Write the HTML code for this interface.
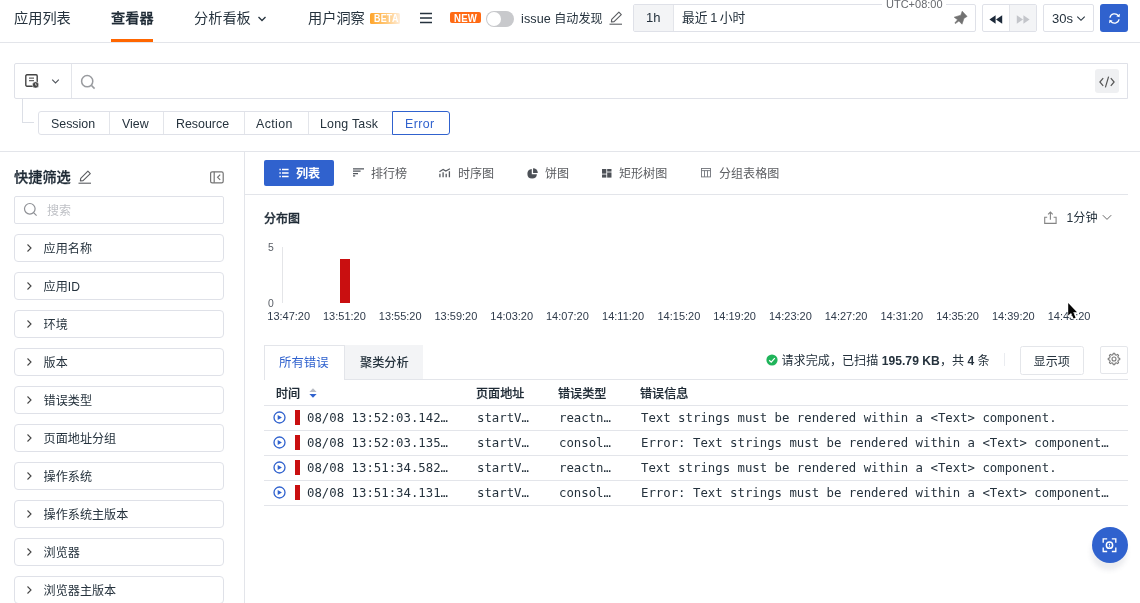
<!DOCTYPE html>
<html lang="zh-CN">
<head>
<meta charset="utf-8">
<title>查看器</title>
<style>
*{box-sizing:border-box;margin:0;padding:0}
html,body{width:1140px;height:603px;overflow:hidden;background:#fff}
body{position:relative;font-family:"Liberation Sans","Noto Sans CJK SC",sans-serif;font-size:12px;color:#25323d;-webkit-font-smoothing:antialiased}
.abs{position:absolute}
.t{position:absolute;white-space:nowrap;line-height:1}
.mono{font-family:"DejaVu Sans Mono","Liberation Mono","Noto Sans CJK SC",monospace}
.hline{position:absolute;height:1px;background:#e3e5ea}
.vline{position:absolute;width:1px;background:#e3e5ea}
.box{position:absolute;border:1px solid #dfe1e8;background:#fff}
svg{position:absolute;overflow:visible}
/* sidebar items */
.fi{position:absolute;left:14px;width:210px;height:28px;border:1px solid #dfe1e8;border-radius:4px;background:#fff}
.fi span{position:absolute;left:28.6px;top:7.8px;font-size:12.1px;line-height:1;white-space:nowrap}
.fi svg{left:11.3px;top:8.3px}
/* table rows */
.row{position:absolute;left:264px;width:864px;height:25px;border-bottom:1px solid #e3e5ea}
.row .c{position:absolute;top:5.8px;font-size:12.33px;line-height:1;white-space:nowrap}
.row .bar{position:absolute;left:31.3px;top:4.2px;width:4.5px;height:15.2px;background:#c90f10}
</style>
</head>
<body>
<div id="app" style="position:absolute;left:0;top:0;width:1140px;height:603px;will-change:transform">

<!-- ================= TOP NAV ================= -->
<div id="nav">
  <div class="t" style="left:14px;top:11.3px;font-size:14.2px">应用列表</div>
  <div class="t" style="left:111px;top:11.3px;font-size:14.2px;font-weight:500;-webkit-text-stroke:0.3px #1f2b36;color:#1f2b36">查看器</div>
  <div class="abs" style="left:111px;top:39px;width:42.4px;height:3px;background:#ff6600"></div>
  <div class="t" style="left:194px;top:11.3px;font-size:14.2px">分析看板</div>
  <svg style="left:257px;top:15px" width="10" height="8" viewBox="0 0 10 8"><path d="M1.5 2 L5 5.5 L8.5 2" fill="none" stroke="#25323d" stroke-width="1.3"/></svg>
  <div class="t" style="left:308px;top:11.3px;font-size:14.2px">用户洞察</div>
  <div class="abs" style="left:369.8px;top:13.4px;width:30.2px;height:11px;border-radius:1.5px;background:linear-gradient(90deg,#ffa52b 0%,#ffc777 55%,#ffeedb 100%)"></div>
  <div class="t" style="left:373.5px;top:13.2px;font-size:10.6px;font-weight:700;color:#fff;letter-spacing:0.3px;transform:scaleX(0.84);transform-origin:0 0">BETA</div>
  <svg style="left:420.2px;top:12.3px" width="12" height="12" viewBox="0 0 12 12"><path d="M0 1.5H12M0 6H12M0 10.5H12" stroke="#25323d" stroke-width="1.4"/></svg>
  <div class="abs" style="left:450.4px;top:12px;width:30.2px;height:11.2px;border-radius:2px;background:#ff6a13"></div>
  <div class="t" style="left:453.8px;top:13.1px;font-size:10.6px;font-weight:700;color:#fff;letter-spacing:0.2px;transform:scaleX(0.91);transform-origin:0 0">NEW</div>
  <div class="abs" style="left:486.3px;top:11px;width:28.2px;height:16px;border-radius:8px;background:#c8c9cc"></div>
  <div class="abs" style="left:487.2px;top:12px;width:14px;height:14px;border-radius:7px;background:#fff"></div>
  <div class="t" style="left:521px;top:12.6px;font-size:12.08px"><span style="font-size:12.6px;letter-spacing:0.1px">issue</span> 自动发现</div>
  <svg style="left:609px;top:11px" width="14" height="14" viewBox="0 0 14 14"><path d="M2.4 10.9 L2.7 8.4 L9.9 1.2 L12.3 3.6 L5.1 10.6 Z" fill="none" stroke="#5a5c60" stroke-width="1.1" stroke-linejoin="round"/><path d="M0.5 13.2H13" stroke="#5a5c60" stroke-width="1.1"/></svg>

  <!-- time box -->
  <div class="box" style="left:633px;top:4px;width:343px;height:28px;border-radius:2px"></div>
  <div class="abs" style="left:634px;top:5px;width:40px;height:26px;background:#f3f4f6;border-right:1px solid #e3e5ea"></div>
  <div class="t" style="left:646px;top:11px;font-size:13px">1h</div>
  <div class="t" style="left:682px;top:11.8px;font-size:12.8px;word-spacing:-1px">最近 1 小时</div>
  <div class="abs" style="left:882px;top:0;width:64px;height:8px;background:#fff"></div>
  <div class="t" style="left:886px;top:-0.6px;font-size:11px;color:#676a6f">UTC+08:00</div>
  <svg style="left:953px;top:10px" width="15" height="15" viewBox="0 0 15 15"><path d="M9.2 1.2 L14.1 6.4 L11 8.3 L9 14.2 L5.9 11 L2.4 13.6 L1.8 13 L4.6 9.8 L1.2 7.2 L7.8 5.2 Z" fill="#727272" stroke="#727272" stroke-width="0.6" stroke-linejoin="round"/></svg>

  <!-- rewind group -->
  <div class="box" style="left:982px;top:4px;width:55px;height:28px;border-radius:2px"></div>
  <div class="abs" style="left:1009px;top:5px;width:27px;height:26px;background:#f3f4f6;border-left:1px solid #e3e5ea"></div>
  <svg style="left:989px;top:14.7px" width="14" height="9" viewBox="0 0 14 9"><path d="M6.6 0.3V8.7L0.4 4.5Z M13.2 0.3V8.7L7 4.5Z" fill="#1d2a3a"/></svg>
  <svg style="left:1016px;top:14.7px" width="14" height="9" viewBox="0 0 14 9"><path d="M0.8 0.3V8.7L7 4.5Z M7.4 0.3V8.7L13.6 4.5Z" fill="#c3c5ca"/></svg>

  <!-- 30s -->
  <div class="box" style="left:1043px;top:4px;width:51px;height:28px;border-radius:2px"></div>
  <div class="t" style="left:1052px;top:11.6px;font-size:13px">30s</div>
  <svg style="left:1076px;top:15.4px" width="10" height="8" viewBox="0 0 10 8"><path d="M1.3 1.6 L5 5.3 L8.7 1.6" fill="none" stroke="#25323d" stroke-width="1.1"/></svg>

  <!-- refresh -->
  <div class="abs" style="left:1100px;top:4px;width:28px;height:28px;border-radius:3px;background:#3062ce"></div>
  <svg style="left:1107.6px;top:12px" width="13" height="13" viewBox="0 0 14 14"><path d="M2.1 6.2 A5 5 0 0 1 11.2 4.2 M11.9 7.8 A5 5 0 0 1 2.8 9.8" fill="none" stroke="#fff" stroke-width="1.4"/><path d="M12.9 2 L12.4 5.6 L8.9 4.6 Z M1.1 12 L1.6 8.4 L5.1 9.4 Z" fill="#fff"/></svg>

  <div class="hline" style="left:0;top:42px;width:1140px"></div>
</div>

<!-- ================= SEARCH BAR ================= -->
<div id="search">
  <div class="box" style="left:14px;top:63px;width:1114px;height:36px;border-radius:2px 0 0 2px"></div>
  <div class="vline" style="left:71px;top:64px;height:34px"></div>
  <svg style="left:25px;top:74.4px" width="15" height="15" viewBox="0 0 15 15"><rect x="0.8" y="0.8" width="11.4" height="11.4" rx="1.1" fill="none" stroke="#444" stroke-width="1.4"/><path d="M4 4.2H9M4 6.6H9" stroke="#666" stroke-width="1.2"/><circle cx="10.6" cy="10.9" r="3.2" fill="#444" stroke="#fff" stroke-width="0.6"/><path d="M10.6 9.2V11.1H12" stroke="#ddd" stroke-width="0.8" fill="none"/></svg>
  <svg style="left:51px;top:77.6px" width="9" height="7" viewBox="0 0 9 7"><path d="M1.2 1.6 L4.5 4.9 L7.8 1.6" fill="none" stroke="#50555c" stroke-width="1.1"/></svg>
  <svg style="left:80.4px;top:73.6px" width="16" height="16" viewBox="0 0 16 16"><circle cx="7.2" cy="7.2" r="5.6" fill="none" stroke="#999b9f" stroke-width="1.5"/><path d="M11.4 11.4L14.6 14.6" stroke="#999b9f" stroke-width="1.5"/></svg>
  <div class="abs" style="left:1095px;top:69px;width:24px;height:24px;border-radius:3px;background:#eff0f2"></div>
  <svg style="left:1099px;top:75.8px" width="16" height="12" viewBox="0 0 16 12"><path d="M4.2 2.2L0.9 6L4.2 9.8M11.8 2.2L15.1 6L11.8 9.8M9.6 0.6L6.4 11.4" fill="none" stroke="#555" stroke-width="1.2"/></svg>

  <!-- connector -->
  <div class="vline" style="left:22px;top:99px;height:24px;background:#dcdfe6"></div>
  <div class="hline" style="left:22px;top:122px;width:12px;background:#dcdfe6"></div>

  <!-- type tabs -->
  <div class="box" style="left:38px;top:111px;width:355px;height:24px;border-radius:3px 0 0 3px"></div>
  <div class="vline" style="left:109px;top:112px;height:22px"></div>
  <div class="vline" style="left:163px;top:112px;height:22px"></div>
  <div class="vline" style="left:244px;top:112px;height:22px"></div>
  <div class="vline" style="left:307.5px;top:112px;height:22px"></div>
  <div class="abs" style="left:392px;top:111px;width:58px;height:24px;border:1px solid #3062ce;border-radius:0 3px 3px 0;background:#fff"></div>
  <div class="t" style="left:51px;top:117.8px;font-size:12.4px">Session</div>
  <div class="t" style="left:122px;top:117.8px;font-size:12.4px">View</div>
  <div class="t" style="left:176px;top:117.8px;font-size:12.4px">Resource</div>
  <div class="t" style="left:256px;top:117.8px;font-size:12.4px;letter-spacing:0.4px">Action</div>
  <div class="t" style="left:320px;top:117.8px;font-size:12.4px;letter-spacing:0.22px">Long Task</div>
  <div class="t" style="left:405px;top:117.8px;font-size:12.4px;letter-spacing:0.4px;color:#3062ce">Error</div>

  <div class="hline" style="left:0;top:151px;width:1140px"></div>
</div>

<!-- ================= SIDEBAR ================= -->
<div id="side">
  <div class="vline" style="left:244px;top:152px;height:451px"></div>
  <div class="t" style="left:14px;top:170px;font-size:14.2px;font-weight:500;-webkit-text-stroke:0.3px #1f2b36;color:#1f2b36">快捷筛选</div>
  <svg style="left:77.8px;top:170.2px" width="14" height="14" viewBox="0 0 14 14"><path d="M2.4 10.9 L2.7 8.4 L9.9 1.2 L12.3 3.6 L5.1 10.6 Z" fill="none" stroke="#5a5c60" stroke-width="1.1" stroke-linejoin="round"/><path d="M0.5 13.2H13" stroke="#5a5c60" stroke-width="1.1"/></svg>
  <svg style="left:209px;top:170px" width="16" height="14" viewBox="0 0 16 14"><rect x="1.6" y="1.8" width="12.6" height="11" rx="1.6" fill="none" stroke="#747474" stroke-width="1.2"/><path d="M5.2 1.8V12.8" stroke="#747474" stroke-width="1.2"/><path d="M11.2 4.7L8.6 7.3L11.2 9.9" fill="none" stroke="#747474" stroke-width="1.2"/></svg>

  <div class="box" style="left:14px;top:196px;width:210px;height:28px;border-radius:2px"></div>
  <svg style="left:23px;top:202px" width="15" height="15" viewBox="0 0 15 15"><circle cx="6.8" cy="6.8" r="5.3" fill="none" stroke="#8f9196" stroke-width="1.2"/><path d="M10.8 10.8L13.6 13.6" stroke="#8f9196" stroke-width="1.2"/></svg>
  <div class="t" style="left:47px;top:205.3px;font-size:12px;color:#bfc1c6">搜索</div>

  <div class="fi" style="top:234px"><svg width="7" height="10" viewBox="0 0 7 10"><path d="M1.5 1.5L5 5L1.5 8.5" fill="none" stroke="#444" stroke-width="1.1"/></svg><span>应用名称</span></div>
  <div class="fi" style="top:272px"><svg width="7" height="10" viewBox="0 0 7 10"><path d="M1.5 1.5L5 5L1.5 8.5" fill="none" stroke="#444" stroke-width="1.1"/></svg><span>应用ID</span></div>
  <div class="fi" style="top:310px"><svg width="7" height="10" viewBox="0 0 7 10"><path d="M1.5 1.5L5 5L1.5 8.5" fill="none" stroke="#444" stroke-width="1.1"/></svg><span>环境</span></div>
  <div class="fi" style="top:348px"><svg width="7" height="10" viewBox="0 0 7 10"><path d="M1.5 1.5L5 5L1.5 8.5" fill="none" stroke="#444" stroke-width="1.1"/></svg><span>版本</span></div>
  <div class="fi" style="top:386px"><svg width="7" height="10" viewBox="0 0 7 10"><path d="M1.5 1.5L5 5L1.5 8.5" fill="none" stroke="#444" stroke-width="1.1"/></svg><span>错误类型</span></div>
  <div class="fi" style="top:424px"><svg width="7" height="10" viewBox="0 0 7 10"><path d="M1.5 1.5L5 5L1.5 8.5" fill="none" stroke="#444" stroke-width="1.1"/></svg><span>页面地址分组</span></div>
  <div class="fi" style="top:462px"><svg width="7" height="10" viewBox="0 0 7 10"><path d="M1.5 1.5L5 5L1.5 8.5" fill="none" stroke="#444" stroke-width="1.1"/></svg><span>操作系统</span></div>
  <div class="fi" style="top:500px"><svg width="7" height="10" viewBox="0 0 7 10"><path d="M1.5 1.5L5 5L1.5 8.5" fill="none" stroke="#444" stroke-width="1.1"/></svg><span>操作系统主版本</span></div>
  <div class="fi" style="top:538px"><svg width="7" height="10" viewBox="0 0 7 10"><path d="M1.5 1.5L5 5L1.5 8.5" fill="none" stroke="#444" stroke-width="1.1"/></svg><span>浏览器</span></div>
  <div class="fi" style="top:576px"><svg width="7" height="10" viewBox="0 0 7 10"><path d="M1.5 1.5L5 5L1.5 8.5" fill="none" stroke="#444" stroke-width="1.1"/></svg><span>浏览器主版本</span></div>
</div>

<!-- ================= MAIN ================= -->
<div id="main">
  <!-- view tabs -->
  <div class="abs" style="left:264px;top:160px;width:70.2px;height:26px;border-radius:2px;background:#3062ce"></div>
  <svg style="left:279px;top:168px" width="10" height="10" viewBox="0 0 10 10"><path d="M3 1.5H9.6M3 5H9.6M3 8.5H9.6" stroke="#fff" stroke-width="1.4"/><path d="M0.4 1.5H1.8M0.4 5H1.8M0.4 8.5H1.8" stroke="#fff" stroke-width="1.4"/></svg>
  <div class="t" style="left:296px;top:167.6px;font-size:12.1px;font-weight:700;color:#fff">列表</div>

  <svg style="left:353px;top:168.3px" width="12" height="9" viewBox="0 0 12 9"><path d="M0 0.8H11M0 3.2H7.6M0 5.6H5M0 7.8H2.2" stroke="#50555c" stroke-width="1.3"/></svg>
  <div class="t" style="left:371px;top:167.8px;font-size:12.05px;color:#5a5c60">排行榜</div>
  <svg style="left:439.4px;top:167.5px" width="12" height="10" viewBox="0 0 12 10"><path d="M0.9 9.3V5.7M4.1 9.3V4.3M7.2 9.3V5.7M10.4 9.3V3.2" stroke="#55595f" stroke-width="1.3"/><path d="M0.4 3.7L4.1 1.5L6.8 3L10.9 0.7" fill="none" stroke="#55595f" stroke-width="1.1"/></svg>
  <div class="t" style="left:458px;top:167.8px;font-size:12.05px;color:#5a5c60">时序图</div>
  <svg style="left:526.6px;top:167.6px" width="11" height="11" viewBox="0 0 12 12"><path d="M5.2 1.2A5.2 5.2 0 1 0 10.8 6.8H5.2Z" fill="#4d5157"/><path d="M6.6 0.2A5.2 5.2 0 0 1 11.8 5.4H6.6Z" fill="#4d5157"/></svg>
  <div class="t" style="left:545px;top:167.8px;font-size:12.05px;color:#5a5c60">饼图</div>
  <svg style="left:602.4px;top:168.6px" width="9.5" height="8.6" viewBox="0 0 11 10"><rect x="0" y="0" width="5" height="5.4" fill="#4d5157"/><rect x="0" y="6.4" width="5" height="3.6" fill="#4d5157"/><rect x="6" y="0" width="5" height="3" fill="#4d5157"/><rect x="6" y="4" width="5" height="6" fill="#4d5157"/></svg>
  <div class="t" style="left:619px;top:167.8px;font-size:12.05px;color:#5a5c60">矩形树图</div>
  <svg style="left:701px;top:168.4px" width="10" height="9.4" viewBox="0 0 10 9.4"><rect x="0.5" y="0.5" width="9" height="8.4" fill="none" stroke="#70747a" stroke-width="0.9"/><path d="M0.5 2.6H9.5M3.5 2.6V8.9M6.5 2.6V8.9" stroke="#70747a" stroke-width="0.9"/></svg>
  <div class="t" style="left:719px;top:167.8px;font-size:12.05px;color:#5a5c60">分组表格图</div>
  <div class="hline" style="left:245px;top:194px;width:883px"></div>

  <!-- distribution chart -->
  <div class="t" style="left:264px;top:212.5px;font-size:12px;font-weight:500;-webkit-text-stroke:0.3px #1f2b36;color:#1f2b36">分布图</div>
  <svg style="left:1043px;top:210px" width="15" height="15" viewBox="0 0 15 15"><path d="M4.2 7.3H1.7V13.4H13.1V7.3H10.6" fill="none" stroke="#858585" stroke-width="1.1"/><path d="M7.4 9.8V2.2M5.1 4.4L7.4 2.1L9.7 4.4" fill="none" stroke="#858585" stroke-width="1.1"/></svg>
  <div class="t" style="left:1066.6px;top:212.4px;font-size:12.1px">1分钟</div>
  <svg style="left:1101.5px;top:213.8px" width="10" height="7" viewBox="0 0 10 7"><path d="M0.8 1.2L5 5.4L9.2 1.2" fill="none" stroke="#666" stroke-width="1"/></svg>

  <div class="t" style="left:268px;top:243.4px;font-size:10.4px;color:#585d65">5</div>
  <div class="t" style="left:268px;top:299.4px;font-size:10.4px;color:#585d65">0</div>
  <div class="vline" style="left:282px;top:246.6px;height:56.8px;background:#e4e5e8"></div>
  <div class="abs" style="left:340px;top:258.8px;width:9.5px;height:44.5px;background:#c90f10"></div>
  <svg style="left:245px;top:308px" width="883" height="16" viewBox="245 308 883 16" font-family="Liberation Sans, sans-serif" font-size="11" fill="#2f3b4b" text-anchor="middle">
    <text x="288.7" y="319.5">13:47:20</text>
    <text x="344.4" y="319.5">13:51:20</text>
    <text x="400.2" y="319.5">13:55:20</text>
    <text x="455.9" y="319.5">13:59:20</text>
    <text x="511.7" y="319.5">14:03:20</text>
    <text x="567.4" y="319.5">14:07:20</text>
    <text x="623.1" y="319.5">14:11:20</text>
    <text x="678.9" y="319.5">14:15:20</text>
    <text x="734.6" y="319.5">14:19:20</text>
    <text x="790.4" y="319.5">14:23:20</text>
    <text x="846.1" y="319.5">14:27:20</text>
    <text x="901.8" y="319.5">14:31:20</text>
    <text x="957.6" y="319.5">14:35:20</text>
    <text x="1013.3" y="319.5">14:39:20</text>
    <text x="1069.1" y="319.5">14:43:20</text>
  </svg>
  <!-- mouse cursor -->
  <svg style="left:1067.6px;top:302.8px" width="11" height="17" viewBox="0 0 10 16"><path d="M0 0 L0 11.8 L2.7 9.3 L5 14.7 L7 13.8 L4.8 8.8 L8.3 8.8 Z" fill="#050505" stroke="#fff" stroke-width="1.1" stroke-linejoin="round" paint-order="stroke"/></svg>

  <!-- table tabs -->
  <div class="abs" style="left:344px;top:345px;width:79px;height:34px;background:#f3f4f6"></div>
  <div class="hline" style="left:264px;top:379px;width:864px"></div>
  <div class="abs" style="left:264px;top:345px;width:81px;height:35px;border:1px solid #e3e5ea;border-bottom:none;background:#fff"></div>
  <div class="t" style="left:279px;top:357.2px;font-size:12.4px;color:#3062ce">所有错误</div>
  <div class="t" style="left:360px;top:357.2px;font-size:12.2px;font-weight:500">聚类分析</div>

  <svg style="left:765.8px;top:353.8px" width="12" height="12" viewBox="0 0 12 12"><circle cx="6" cy="6" r="5.6" fill="#1fb45a"/><path d="M3.2 6.2L5.2 8.1L8.8 4.2" fill="none" stroke="#fff" stroke-width="1.2"/></svg>
  <div class="t" style="left:781.5px;top:354.6px;font-size:12.1px">请求完成，已扫描 <b style="letter-spacing:0.05px">195.79 KB</b>，共 <b>4</b> 条</div>
  <div class="vline" style="left:1004.4px;top:353px;height:13px;background:#eaecf0"></div>
  <div class="box" style="left:1019.6px;top:346px;width:64.4px;height:28.6px;border-radius:2.5px;border-color:#e4e6ea"></div>
  <div class="t" style="left:1033.6px;top:355.8px;font-size:12.1px">显示项</div>
  <div class="box" style="left:1100px;top:345.6px;width:28px;height:28px;border-radius:2px;border-color:#e4e6ea"></div>
  <svg style="left:1106.9px;top:352.2px" width="14" height="14" viewBox="0 0 14 14"><path d="M5.95 2.62 L6.23 1.25 L7.77 1.25 L8.05 2.62 L9.35 3.16 L10.52 2.39 L11.61 3.48 L10.84 4.65 L11.38 5.95 L12.75 6.23 L12.75 7.77 L11.38 8.05 L10.84 9.35 L11.61 10.52 L10.52 11.61 L9.35 10.84 L8.05 11.38 L7.77 12.75 L6.23 12.75 L5.95 11.38 L4.65 10.84 L3.48 11.61 L2.39 10.52 L3.16 9.35 L2.62 8.05 L1.25 7.77 L1.25 6.23 L2.62 5.95 L3.16 4.65 L2.39 3.48 L3.48 2.39 L4.65 3.16Z" fill="none" stroke="#7a7a7a" stroke-width="1.1" stroke-linejoin="round"/><circle cx="7" cy="7" r="2" fill="none" stroke="#7a7a7a" stroke-width="1.1"/></svg>

  <!-- table header -->
  <div class="t" style="left:276px;top:387.6px;font-size:12.1px;font-weight:500;-webkit-text-stroke:0.2px #1f2b36;color:#1f2b36">时间</div>
  <svg style="left:309px;top:387.8px" width="8" height="10" viewBox="0 0 8 10"><path d="M0.4 4.1L4 0.3L7.6 4.1Z" fill="#b8bcc4"/><path d="M0.4 5.9L4 9.7L7.6 5.9Z" fill="#3062ce"/></svg>
  <div class="t" style="left:476px;top:387.6px;font-size:12.1px;font-weight:500;-webkit-text-stroke:0.2px #1f2b36;color:#1f2b36">页面地址</div>
  <div class="t" style="left:558px;top:387.6px;font-size:12.1px;font-weight:500;-webkit-text-stroke:0.2px #1f2b36;color:#1f2b36">错误类型</div>
  <div class="t" style="left:640px;top:387.6px;font-size:12.1px;font-weight:500;-webkit-text-stroke:0.2px #1f2b36;color:#1f2b36">错误信息</div>
  <div class="hline" style="left:264px;top:405px;width:864px"></div>

  <!-- rows -->
  <div class="row" style="top:406px">
    <svg style="left:8.5px;top:5.2px" width="13" height="13" viewBox="0 0 13 13"><circle cx="6.5" cy="6.5" r="5.5" fill="none" stroke="#3062ce" stroke-width="1.3"/><path d="M4.7 4.1V8.9L8.9 6.5Z" fill="#3062ce"/></svg>
    <div class="bar"></div>
    <div class="c mono" style="left:43px">08/08 13:52:03.142…</div>
    <div class="c mono" style="left:213px">startV…</div>
    <div class="c mono" style="left:295px">reactn…</div>
    <div class="c mono" style="left:377px">Text strings must be rendered within a &lt;Text&gt; component.</div>
  </div>
  <div class="row" style="top:431px">
    <svg style="left:8.5px;top:5.2px" width="13" height="13" viewBox="0 0 13 13"><circle cx="6.5" cy="6.5" r="5.5" fill="none" stroke="#3062ce" stroke-width="1.3"/><path d="M4.7 4.1V8.9L8.9 6.5Z" fill="#3062ce"/></svg>
    <div class="bar"></div>
    <div class="c mono" style="left:43px">08/08 13:52:03.135…</div>
    <div class="c mono" style="left:213px">startV…</div>
    <div class="c mono" style="left:295px">consol…</div>
    <div class="c mono" style="left:377px">Error: Text strings must be rendered within a &lt;Text&gt; component…</div>
  </div>
  <div class="row" style="top:456px">
    <svg style="left:8.5px;top:5.2px" width="13" height="13" viewBox="0 0 13 13"><circle cx="6.5" cy="6.5" r="5.5" fill="none" stroke="#3062ce" stroke-width="1.3"/><path d="M4.7 4.1V8.9L8.9 6.5Z" fill="#3062ce"/></svg>
    <div class="bar"></div>
    <div class="c mono" style="left:43px">08/08 13:51:34.582…</div>
    <div class="c mono" style="left:213px">startV…</div>
    <div class="c mono" style="left:295px">reactn…</div>
    <div class="c mono" style="left:377px">Text strings must be rendered within a &lt;Text&gt; component.</div>
  </div>
  <div class="row" style="top:481px">
    <svg style="left:8.5px;top:5.2px" width="13" height="13" viewBox="0 0 13 13"><circle cx="6.5" cy="6.5" r="5.5" fill="none" stroke="#3062ce" stroke-width="1.3"/><path d="M4.7 4.1V8.9L8.9 6.5Z" fill="#3062ce"/></svg>
    <div class="bar"></div>
    <div class="c mono" style="left:43px">08/08 13:51:34.131…</div>
    <div class="c mono" style="left:213px">startV…</div>
    <div class="c mono" style="left:295px">consol…</div>
    <div class="c mono" style="left:377px">Error: Text strings must be rendered within a &lt;Text&gt; component…</div>
  </div>

  <!-- floating button -->
  <div class="abs" style="left:1092px;top:527px;width:36px;height:36px;border-radius:18px;background:#3062ce;box-shadow:-1px 7px 5px 0 rgba(70,80,110,0.11)"></div>
  <svg style="left:1102.4px;top:538.2px" width="15" height="14.4" viewBox="0 0 16 16"><path d="M1 5.4V1H5.4M10.6 1H15V5.4M15 10.6V15H10.6M5.4 15H1V10.6" fill="none" stroke="#fff" stroke-width="1.5"/><circle cx="8" cy="8" r="3.5" fill="none" stroke="#fff" stroke-width="1.6"/><path d="M8 6.3V8.4M8 9.2V9.9" stroke="#fff" stroke-width="1.2"/></svg>
</div>

</div>
</body>
</html>
